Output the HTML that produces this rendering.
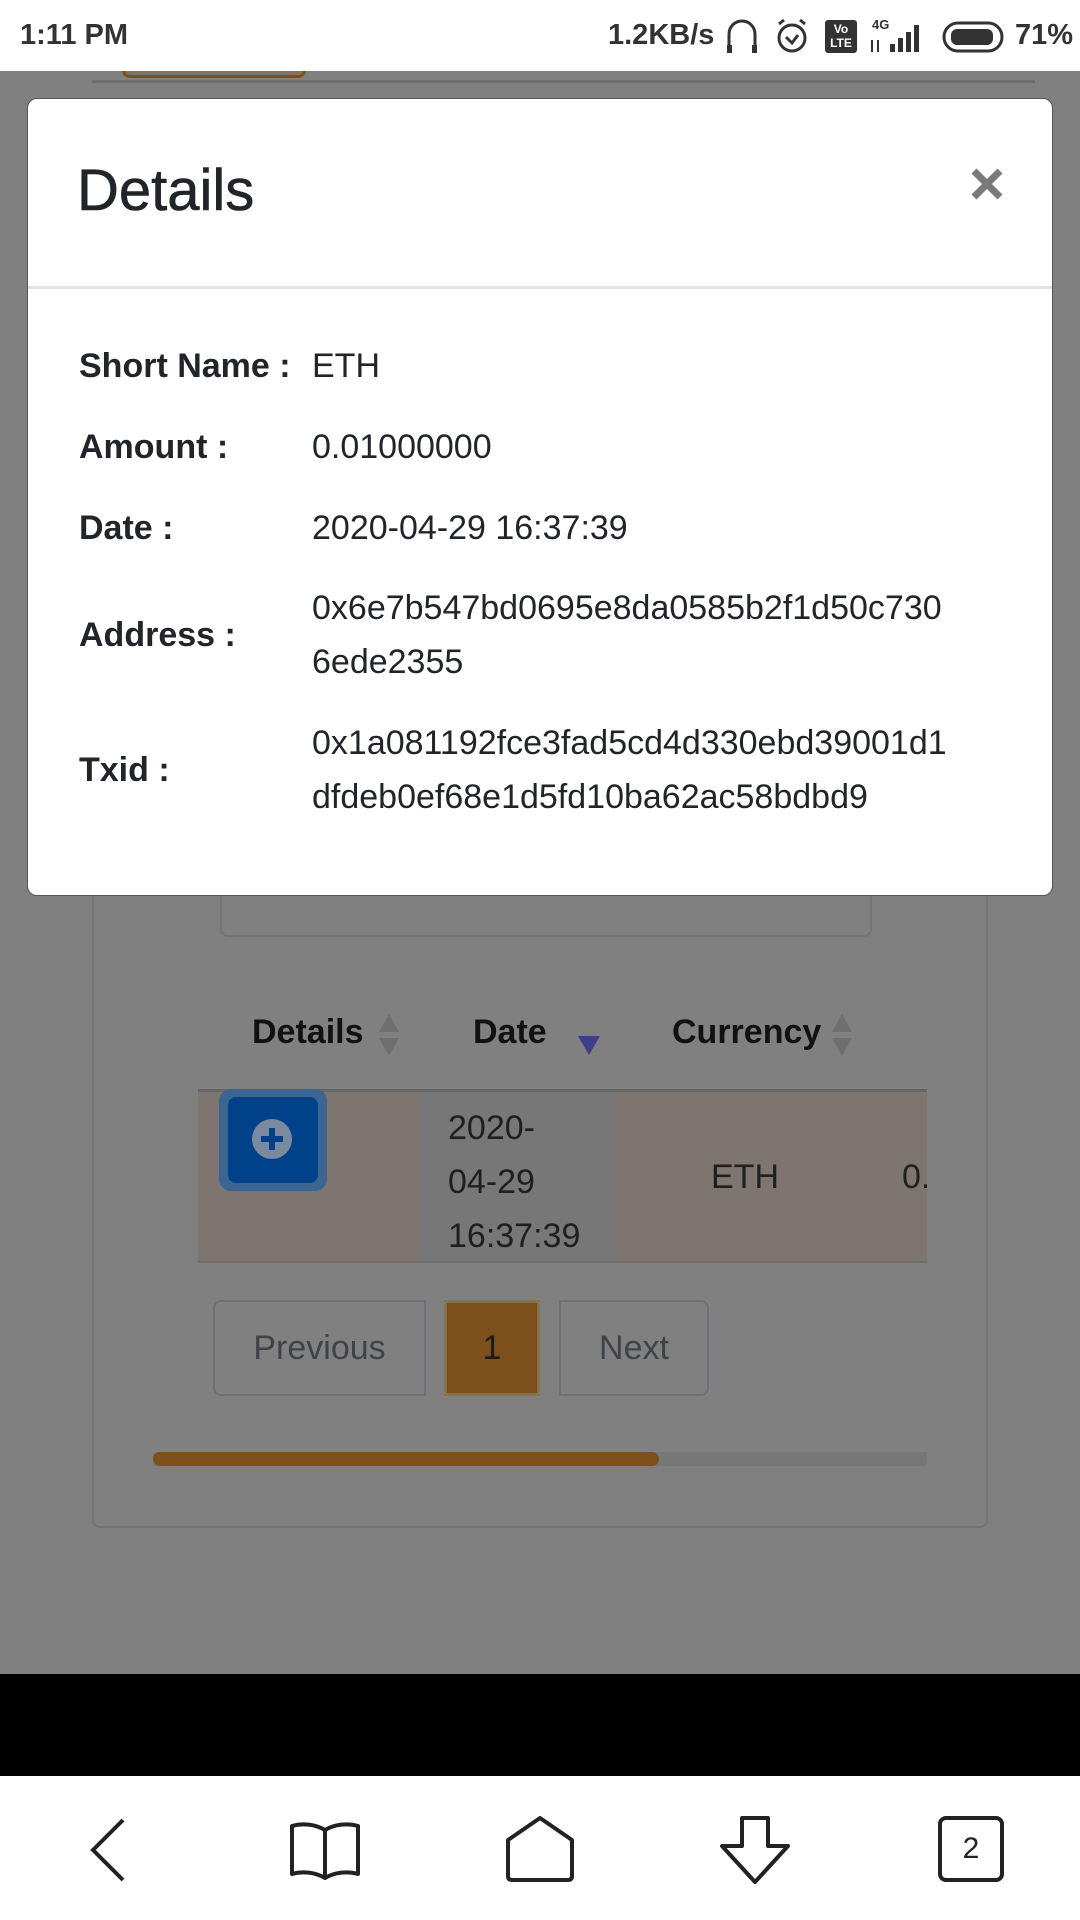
<!DOCTYPE html>
<html><head><meta charset="utf-8"><style>
*{box-sizing:border-box;margin:0;padding:0}
body{width:1080px;height:1920px;position:relative;overflow:hidden;background:#808080;font-family:"Liberation Sans",Roboto,sans-serif;color:#212529}
.a{position:absolute}
.sb{left:0;top:0;width:1080px;height:71px;background:#fff;color:#333;font-size:29px;font-weight:bold}
.t{white-space:nowrap}
.modal{left:27px;top:98px;width:1026px;height:798px;background:#fff;border-radius:10px;border:1px solid #555}
.lab{left:51px;font-weight:bold;font-size:34px;color:#212529}
.val{left:284px;font-size:34px;color:#212529;line-height:54px}
.th{font-weight:bold;font-size:34px;color:#111}
.nav{left:0;top:1776px;width:1080px;height:144px;background:#fff}
</style></head><body>
<div class="a" style="left:122px;top:60px;width:184px;height:18px;border:3px solid #7d4f1a;border-top:none;border-radius:0 0 8px 8px;background:#7f7468"></div>
<div class="a" style="left:92px;top:80px;width:943px;height:3px;background:#6c6e70"></div>
<div class="a" style="left:92px;top:880px;width:896px;height:648px;border:2px solid #737577;border-top:none;border-radius:0 0 8px 8px"></div>
<div class="a" style="left:220px;top:860px;width:652px;height:77px;border:2px solid #737577;border-top:none;border-radius:0 0 8px 8px;overflow:hidden"><div class="a t" style="left:24px;top:-4px;font-size:34px;color:#3a3d40">Search...</div></div>
<div class="a th t" style="left:252px;top:1013px">Details</div>
<div class="a th t" style="left:473px;top:1013px">Date</div>
<div class="a th t" style="left:672px;top:1013px">Currency</div>
<svg class="a" style="left:377px;top:1012px" width="24" height="46"><path d="M12 2 L22 20 L2 20Z M2 26 L22 26 L12 44Z" fill="#6f6f6f"/></svg>
<svg class="a" style="left:830px;top:1012px" width="24" height="46"><path d="M12 2 L22 20 L2 20Z M2 26 L22 26 L12 44Z" fill="#6f6f6f"/></svg>
<svg class="a" style="left:577px;top:1034px" width="24" height="22"><path d="M1 2 L23 2 L12 21Z" fill="#3d3f8a"/></svg>
<div class="a" style="left:198px;top:1089px;width:729px;height:3px;background:#666"></div>
<div class="a" style="left:198px;top:1092px;width:729px;height:170px;background:#7e7570"></div>
<div class="a" style="left:419px;top:1092px;width:197px;height:170px;background:#777"></div>
<div class="a" style="left:198px;top:1261px;width:729px;height:2px;background:#6e6e6e"></div>
<div class="a" style="left:219px;top:1089px;width:108px;height:102px;border-radius:12px;background:#3d6592"></div>
<div class="a" style="left:228px;top:1097px;width:90px;height:86px;border-radius:8px;background:#00428a"></div>
<svg class="a" style="left:251px;top:1118px" width="42" height="42"><circle cx="21" cy="21" r="20" fill="#7c8aa0"/><path d="M21 10 V32 M10 21 H32" stroke="#00428a" stroke-width="6"/></svg>
<div class="a t" style="left:448px;top:1101px;font-size:34px;line-height:54px;color:#1f1f1f">2020-<br>04-29<br>16:37:39</div>
<div class="a t" style="left:711px;top:1158px;font-size:34px;color:#1f1f1f">ETH</div>
<div class="a" style="left:902px;top:1158px;width:25px;overflow:hidden;font-size:34px;color:#1f1f1f">0.0</div>
<div class="a" style="left:213px;top:1300px;width:213px;height:96px;border:2px solid #6e7073;border-radius:8px 0 0 8px;font-size:34px;color:#3f4347;text-align:center;line-height:92px">Previous</div>
<div class="a" style="left:444px;top:1300px;width:96px;height:96px;background:#7d4f1a;border:3px solid #85724f;font-size:34px;color:#1c1c1c;text-align:center;line-height:90px">1</div>
<div class="a" style="left:559px;top:1300px;width:150px;height:96px;border:2px solid #6e7073;border-radius:0 8px 8px 0;font-size:34px;color:#3f4347;text-align:center;line-height:92px">Next</div>
<div class="a" style="left:153px;top:1452px;width:774px;height:14px;background:#777"></div>
<div class="a" style="left:153px;top:1452px;width:506px;height:14px;background:#7d4f1a;border-radius:7px"></div>
<div class="a" style="left:0;top:1674px;width:1080px;height:102px;background:#000"></div>

<div class="a sb">
<div class="a t" style="left:20px;top:19px">1:11 PM</div>
<div class="a t" style="left:608px;top:19px">1.2KB/s</div>
<svg class="a" style="left:724px;top:18px" width="36" height="38"><path d="M5 30 V16 A13 13 0 0 1 31 16 V30" fill="none" stroke="#333" stroke-width="3"/><rect x="3" y="27" width="5" height="8" fill="#333"/><rect x="28" y="27" width="5" height="8" fill="#333"/></svg>
<svg class="a" style="left:774px;top:16px" width="36" height="40"><circle cx="18" cy="22" r="13" fill="none" stroke="#333" stroke-width="3"/><path d="M12 21 L18 27 L24 19" fill="none" stroke="#333" stroke-width="3"/><path d="M5 8 L10 4 M31 8 L26 4" stroke="#333" stroke-width="3"/></svg>
<div class="a" style="left:825px;top:20px;width:32px;height:33px;background:#333;border-radius:3px;color:#fff;font-size:12px;line-height:14px;text-align:center;padding-top:2px">Vo<br>LTE</div>
<div class="a" style="left:872px;top:17px;font-size:13px">4G</div>
<svg class="a" style="left:868px;top:22px" width="60" height="30"><rect x="22" y="22" width="5" height="8" fill="#333"/><rect x="30" y="16" width="5" height="14" fill="#333"/><rect x="38" y="10" width="5" height="20" fill="#333"/><rect x="46" y="3" width="5" height="27" fill="#333"/><path d="M4 18 V30 M10 18 V30" stroke="#333" stroke-width="2"/></svg>
<svg class="a" style="left:942px;top:20px" width="68" height="34"><rect x="2" y="3" width="58" height="28" rx="14" fill="none" stroke="#333" stroke-width="3"/><rect x="9" y="9" width="42" height="16" rx="6" fill="#333"/></svg>
<div class="a t" style="left:1015px;top:19px">71%</div>
</div>

<div class="a modal">
<div class="a t" style="left:49px;top:58px;font-size:58px;color:#212529;-webkit-text-stroke:0.6px #212529">Details</div>
<svg class="a" style="left:942px;top:68px" width="34" height="34"><path d="M4 4 L30 30 M30 4 L4 30" stroke="#7a7a7a" stroke-width="7"/></svg>
<div class="a" style="left:0;top:187px;width:1024px;height:3px;background:#dee2e6"></div>
<div class="a lab t" style="top:248px">Short Name :</div><div class="a val t" style="top:240px">ETH</div>
<div class="a lab t" style="top:329px">Amount :</div><div class="a val t" style="top:321px">0.01000000</div>
<div class="a lab t" style="top:410px">Date :</div><div class="a val t" style="top:402px">2020-04-29 16:37:39</div>
<div class="a lab t" style="top:517px">Address :</div><div class="a val t" style="top:482px">0x6e7b547bd0695e8da0585b2f1d50c730<br>6ede2355</div>
<div class="a lab t" style="top:652px">Txid :</div><div class="a val t" style="top:617px">0x1a081192fce3fad5cd4d330ebd39001d1<br>dfdeb0ef68e1d5fd10ba62ac58bdbd9</div>
</div>

<div class="a nav">
<svg class="a" style="left:85px;top:40px" width="44" height="68"><path d="M38 4 L8 34 L38 64" fill="none" stroke="#222" stroke-width="4"/></svg>
<svg class="a" style="left:288px;top:42px" width="74" height="64"><path d="M37 12 C27 6 14 5 4 8 V56 C14 53 27 54 37 60 C47 54 60 53 70 56 V8 C60 5 47 6 37 12 Z M37 12 V60" fill="none" stroke="#222" stroke-width="4" stroke-linejoin="round"/></svg>
<svg class="a" style="left:504px;top:38px" width="72" height="70"><path d="M36 4 L68 26 V62 Q68 66 64 66 H8 Q4 66 4 62 V26 Z" fill="none" stroke="#222" stroke-width="4" stroke-linejoin="round"/></svg>
<svg class="a" style="left:718px;top:38px" width="74" height="72"><path d="M24 4 H50 V32 H70 L37 68 L4 32 H24 Z" fill="none" stroke="#222" stroke-width="4" stroke-linejoin="round"/></svg>
<div class="a" style="left:938px;top:40px;width:66px;height:66px;border:4px solid #222;border-radius:8px;font-size:30px;text-align:center;line-height:58px;color:#222">2</div>
</div>
</body></html>
